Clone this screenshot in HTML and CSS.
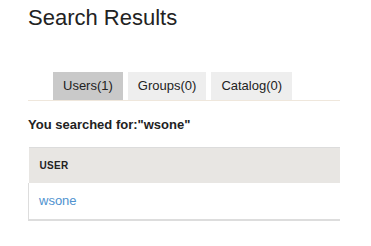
FILE: index.html
```html
<!DOCTYPE html>
<html lang="en">
<head>
  <meta charset="UTF-8" />
  <title>Search Results</title>
  <link rel="stylesheet" href="styles.css">
</head>
<body>
  <div class="page">
    <h1>Search Results</h1>

    <div class="tabs">
      <span class="tab active">Users(1)</span>
      <span class="tab">Groups(0)</span>
      <span class="tab">Catalog(0)</span>
    </div>

    <p class="query">You searched for:"wsone"</p>

    <table class="results">
      <thead>
        <tr><th>USER</th></tr>
      </thead>
      <tbody>
        <tr><td><a href="#">wsone</a></td></tr>
      </tbody>
    </table>
  </div>
</body>
</html>
```

FILE: styles.css
```css
* {
  box-sizing: border-box;
}

body {
  margin: 0;
  background: #fff;
  color: #222;
  font-family: "Liberation Sans", Arial, sans-serif;
}

.page {
  width: 312px;
  margin-left: 28px;
}

h1 {
  margin: 0;
  padding-top: 5px;
  font-size: 22px;
  font-weight: normal;
  line-height: 25px;
}

.tabs {
  display: flex;
  gap: 5px;
  margin-top: 42px;
  padding-left: 25px;
  border-bottom: 1px solid #efe7dc;
}

.tab {
  height: 28px;
  line-height: 28px;
  padding: 0 10px;
  font-size: 13px;
  background: #eeeeee;
  color: #222;
}

.tab.active {
  background: #c9c9c9;
}

.query {
  margin: 16px 0 14px;
  font-size: 13px;
  font-weight: bold;
  line-height: 16px;
}

.results {
  width: 100%;
  border-collapse: collapse;
}

.results th {
  height: 35px;
  padding: 0 10px 0 11px;
  text-align: left;
  font-size: 10px;
  font-weight: bold;
  letter-spacing: 0.3px;
  background: #e8e6e3;
  border-top: 1px solid #dcdcdc;
}

.results td {
  height: 37px;
  padding: 0 10px;
  font-size: 13px;
  border-left: 1px solid #dddddd;
  border-bottom: 2px solid #dddddd;
}

.results a {
  color: #4f92cf;
  text-decoration: none;
}
```
